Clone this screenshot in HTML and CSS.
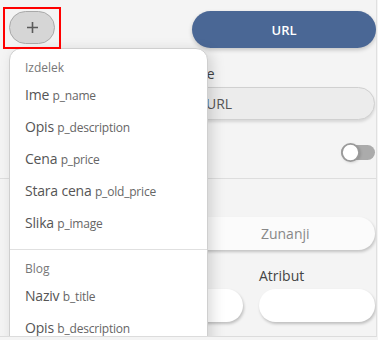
FILE: index.html
```html
<!DOCTYPE html>
<html lang="sl">

<head>
  <meta charset="UTF-8">
  <meta name="viewport" content="width=device-width,initial-scale=1.0">
  <title>Urejanje polj</title>
  <link rel="stylesheet" href="styles.css">
</head>

<body>
  <div class="frame">
    <div class="toolbar">
      <div class="highlight">
        <button class="add-btn" aria-label="Dodaj">
          <svg width="13" height="13" viewBox="0 0 13 13">
            <path d="M6.5 1v11M1 6.5h11" stroke="#5a5a5a" stroke-width="1.6" fill="none" />
          </svg>
        </button>
      </div>
      <button class="url-btn">URL</button>
    </div>

    <div class="form">
      <div class="grid-2">
        <div class="field">
          <label>&nbsp;</label>
          <input type="text" class="pill-input grey">
        </div>
        <div class="field">
          <label>Ime</label>
          <input type="text" class="pill-input grey" placeholder="URL">
        </div>
      </div>

      <div class="toggle-row">
        <span class="toggle"><span class="knob"></span></span>
      </div>

      <hr class="divider">

      <div class="segment">
        <button></button>
        <button>Zunanji</button>
      </div>

      <div class="grid-3">
        <div class="field">
          <label>&nbsp;</label>
          <input type="text" class="pill-input">
        </div>
        <div class="field">
          <label>&nbsp;</label>
          <input type="text" class="pill-input">
        </div>
        <div class="field">
          <label>Atribut</label>
          <input type="text" class="pill-input">
        </div>
      </div>
    </div>

    <div class="menu">
      <div class="menu-section">
        <div class="menu-header">Izdelek</div>
        <div class="menu-item">Ime <small>p_name</small></div>
        <div class="menu-item">Opis <small>p_description</small></div>
        <div class="menu-item">Cena <small>p_price</small></div>
        <div class="menu-item">Stara cena <small>p_old_price</small></div>
        <div class="menu-item">Slika <small>p_image</small></div>
      </div>
      <div class="menu-section">
        <div class="menu-header">Blog</div>
        <div class="menu-item">Naziv <small>b_title</small></div>
        <div class="menu-item">Opis <small>b_description</small></div>
      </div>
    </div>
  </div>
</body>

</html>
```

FILE: styles.css
```css
body {
  margin: 0;
  background: #f4f4f4;
  font-family: "Open Sans", "Noto Sans", sans-serif;
  color: #555;
}

.frame {
  position: relative;
  width: 376px;
  height: 336px;
  border-right: 1px solid #e0e0e0;
  border-bottom: 1px solid #dcdcdc;
  overflow: hidden;
}

/* --- toolbar --- */
.toolbar {
  display: flex;
  align-items: flex-start;
  padding: 7px 0 0 3px;
}

.highlight {
  position: relative;
  z-index: 3;
  border: 2px solid #f00;
  padding: 2px 4px 3px 4px;
}

.add-btn {
  display: flex;
  align-items: center;
  justify-content: center;
  width: 46px;
  height: 33px;
  padding: 0;
  border: 1px solid #a9a9a9;
  border-radius: 17px;
  background: #d6d6d6;
}

.url-btn {
  margin-left: auto;
  margin-top: 4px;
  width: 184px;
  height: 37px;
  border: 0;
  border-radius: 19px;
  background: #4a6795;
  color: #fff;
  font-family: inherit;
  font-size: 13px;
  font-weight: 600;
  box-shadow: 0 2px 4px rgba(0, 0, 0, 0.2);
}

/* --- form --- */
.form {
  padding: 15px 1px 0 16px;
}

.grid-2 {
  display: grid;
  grid-template-columns: 1fr 185px;
  column-gap: 8px;
}

.grid-3 {
  display: grid;
  grid-template-columns: 1fr 116px 116px;
  column-gap: 16px;
  margin-top: 16px;
}

.field label {
  display: block;
  font-size: 14px;
  line-height: 19px;
  margin-bottom: 4px;
  color: #444;
}

.pill-input {
  box-sizing: border-box;
  width: 100%;
  height: 33px;
  padding: 0 15px;
  border: 0;
  border-radius: 17px;
  background: #fff;
  font-family: inherit;
  font-size: 14px;
  color: #555;
  box-shadow: 1px 2px 3px rgba(0, 0, 0, 0.22);
}

.pill-input.grey {
  background: #ececec;
  border: 1px solid #d0d0d0;
  box-shadow: 0 2px 3px rgba(0, 0, 0, 0.12);
}

.pill-input::placeholder {
  color: #555;
}

.toggle-row {
  display: flex;
  justify-content: flex-end;
  align-items: center;
  height: 19px;
  margin-top: 23px;
}

.toggle {
  position: relative;
  width: 34px;
  height: 15px;
  border-radius: 8px;
  background: #ababab;
}

.knob {
  position: absolute;
  left: 0;
  top: -3px;
  width: 17px;
  height: 17px;
  border: 2px solid #9a9a9a;
  border-radius: 50%;
  background: #fff;
  box-sizing: content-box;
  transform: translate(-1px, 0) scale(0.9);
  box-shadow: 1px 1px 3px rgba(0, 0, 0, 0.15);
}

.divider {
  border: 0;
  border-top: 1px solid #dddddd;
  margin: 16px -1px 0 -16px;
}

.segment {
  display: grid;
  grid-template-columns: 1fr 1fr;
  height: 33px;
  margin-top: 38px;
  border-radius: 17px;
  background: #fbfbfb;
  box-shadow: 1px 2px 3px rgba(0, 0, 0, 0.2);
}

.segment button {
  border: 0;
  background: none;
  font-family: inherit;
  font-size: 14px;
  color: #888;
}

/* --- dropdown --- */
.menu {
  position: absolute;
  z-index: 2;
  left: 9px;
  top: 48px;
  width: 197px;
  height: 320px;
  border: 1px solid #cfcfcf;
  border-radius: 12px 12px 0 0;
  background: #fff;
  box-shadow: 4px 3px 14px rgba(0, 0, 0, 0.15);
}

.menu-section {
  padding: 11px 0 10px;
}

.menu-section + .menu-section {
  border-top: 1px solid #e0e0e0;
}

.menu-header {
  padding-left: 15px;
  margin-bottom: 3px;
  font-size: 12px;
  line-height: 16px;
  color: #777;
}

.menu-item {
  height: 32px;
  padding-left: 15px;
  font-size: 14px;
  line-height: 32px;
  letter-spacing: -0.2px;
  color: #555;
  white-space: nowrap;
}

.menu-item small {
  font-size: 12px;
  line-height: 1;
  color: #666;
}
```
